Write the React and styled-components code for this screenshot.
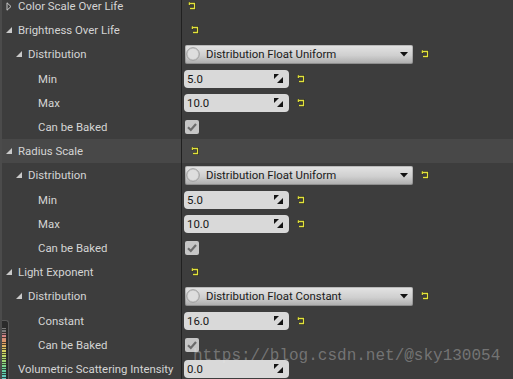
import React from "react";
import styled, { createGlobalStyle } from "styled-components";

const GlobalStyle = createGlobalStyle`
  html, body {
    margin: 0;
    padding: 0;
    background: #3d3d3d;
    overflow: hidden;
  }
`;

const rows = [
  { label: "Color Scale Over Life", level: 0, arrow: "closed", value: { type: "reset", offset: 7 } },
  { label: "Brightness Over Life", level: 0, arrow: "open", value: { type: "reset", offset: 10 } },
  { label: "Distribution", level: 1, arrow: "open", value: { type: "select", text: "Distribution Float Uniform" } },
  { label: "Min", level: 2, value: { type: "number", text: "5.0" } },
  { label: "Max", level: 2, value: { type: "number", text: "10.0" } },
  { label: "Can be Baked", level: 2, value: { type: "check" } },
  { label: "Radius Scale", level: 0, arrow: "open", hover: true, value: { type: "reset", offset: 10 } },
  { label: "Distribution", level: 1, arrow: "open", value: { type: "select", text: "Distribution Float Uniform" } },
  { label: "Min", level: 2, value: { type: "number", text: "5.0" } },
  { label: "Max", level: 2, value: { type: "number", text: "10.0" } },
  { label: "Can be Baked", level: 2, value: { type: "check" } },
  { label: "Light Exponent", level: 0, arrow: "open", value: { type: "reset", offset: 10 } },
  { label: "Distribution", level: 1, arrow: "open", value: { type: "select", text: "Distribution Float Constant" } },
  { label: "Constant", level: 2, value: { type: "number", text: "16.0" } },
  { label: "Can be Baked", level: 2, value: { type: "check" } },
  { label: "Volumetric Scattering Intensity", level: 0, value: { type: "number", text: "0.0", noReset: true } },
];

const ResetIcon = () => (
  <svg width="8" height="8" viewBox="0 0 8 8">
    <path d="M1.5 1.5 H6.5 V6.5 H2" fill="none" stroke="#222" strokeWidth="2.6" />
    <path d="M1.3 0 V3.2" stroke="#222" strokeWidth="2.4" />
    <path d="M1.5 1.5 H6.5 V6.5 H2" fill="none" stroke="#e2e23c" strokeWidth="1.3" />
    <path d="M1.3 0.3 V2.9" stroke="#e2e23c" strokeWidth="1.3" />
  </svg>
);

const Arrow = ({ kind }) =>
  kind === "open" ? (
    <svg width="6" height="6" viewBox="0 0 6 6">
      <polygon points="6,0 6,6 0,6" fill="#c9c9c9" />
    </svg>
  ) : kind === "closed" ? (
    <svg width="6" height="9" viewBox="0 0 6 9">
      <polygon points="1,0.8 5,4.5 1,8.2" fill="none" stroke="#c9c9c9" strokeWidth="1" />
    </svg>
  ) : null;

const SpinIcon = () => (
  <svg width="9" height="9" viewBox="0 0 9 9">
    <polygon points="0,0 5,0 0,5" fill="#141414" />
    <polygon points="9,9 3,9 9,3" fill="#141414" />
  </svg>
);

const Value = ({ value }) => {
  if (value.type === "reset") {
    return (
      <ResetSlot style={{ marginLeft: value.offset - 3 }}>
        <ResetIcon />
      </ResetSlot>
    );
  }
  if (value.type === "select") {
    return (
      <>
        <Select>
          <svg width="14" height="14" viewBox="0 0 14 14">
            <circle cx="7" cy="7" r="6.3" fill="#d4d4d4" stroke="#9c9c9c" strokeWidth="1" />
            <circle cx="7" cy="7" r="5" fill="#dedede" />
          </svg>
          <SelectText>{value.text}</SelectText>
          <svg width="8" height="5" viewBox="0 0 8 5">
            <polygon points="0,0 8,0 4,4.5" fill="#111" />
          </svg>
        </Select>
        <ResetSlot>
          <ResetIcon />
        </ResetSlot>
      </>
    );
  }
  if (value.type === "number") {
    return (
      <>
        <NumberBox>
          <span>{value.text}</span>
          <SpinIcon />
        </NumberBox>
        {!value.noReset && (
          <ResetSlot>
            <ResetIcon />
          </ResetSlot>
        )}
      </>
    );
  }
  return (
    <Check>
      <svg width="14" height="14" viewBox="0 0 14 14">
        <path d="M3 7.3 L5.8 10 L11 4" fill="none" stroke="#6c6c6c" strokeWidth="2.2" />
      </svg>
    </Check>
  );
};

const App = () => (
  <>
    <GlobalStyle />
    <Frame>
      <List>
        {rows.map((row, i) => (
          <Row key={i} $hover={row.hover}>
            <Name $level={row.level}>
              <ArrowSlot>
                <Arrow kind={row.arrow} />
              </ArrowSlot>
              {row.label}
            </Name>
            <Separator />
            <Cell>
              <Value value={row.value} />
            </Cell>
          </Row>
        ))}
      </List>
      <Meter>
        <MeterBar />
      </Meter>
      <Watermark>https://blog.csdn.net/@sky130054</Watermark>
    </Frame>
  </>
);

export default App;

const Frame = styled.div`
  position: relative;
  width: 513px;
  height: 379px;
  overflow: hidden;
  background: #3d3d3d;
  border-left: 2px solid #4b4b4b;
  box-sizing: border-box;
  font-family: Roboto, "Liberation Sans", sans-serif;
  font-size: 11.4px;
`;

const List = styled.div`
  margin-top: -6px;
  display: flex;
  flex-direction: column;
`;

const Row = styled.div`
  display: grid;
  grid-template-columns: 179px 1px 1fr;
  height: 24.2px;
  background: ${(p) => (p.$hover ? "#484848" : "transparent")};
`;

const Name = styled.div`
  display: flex;
  align-items: center;
  padding-left: ${(p) => 4 + p.$level * 10}px;
  color: #d4d4d4;
  white-space: nowrap;
`;

const ArrowSlot = styled.span`
  display: inline-flex;
  align-items: center;
  width: 12px;
  height: 9px;
`;

const Separator = styled.div`
  background: #202020;
`;

const Cell = styled.div`
  display: flex;
  align-items: center;
  padding-left: 2px;
  gap: 8px;
`;

const ResetSlot = styled.span`
  display: inline-flex;
  width: 8px;
  height: 8px;
`;

const Select = styled.div`
  width: 228px;
  height: 19px;
  margin-left: 1px;
  box-sizing: border-box;
  display: flex;
  align-items: center;
  gap: 6px;
  padding: 0 5px 0 1px;
  border-radius: 2px;
  background: linear-gradient(#e4e4e4, #cfcfcf 55%, #acacac);
  box-shadow: inset 0 0 0 1px rgba(0, 0, 0, 0.18);
`;

const SelectText = styled.span`
  flex: 1;
  color: #1a1a1a;
`;

const NumberBox = styled.div`
  width: 105px;
  height: 18px;
  box-sizing: border-box;
  display: flex;
  align-items: center;
  justify-content: space-between;
  padding: 0 6px 0 3px;
  border-radius: 4px;
  background: #d9d9d9;
  color: #161616;
`;

const Check = styled.div`
  width: 14px;
  height: 14px;
  margin-left: 1px;
  border-radius: 2px;
  background: #c6c6c6;
  display: flex;
`;

const Meter = styled.div`
  position: absolute;
  left: -2px;
  bottom: 0;
  width: 9px;
  height: 59px;
  box-sizing: border-box;
  padding: 7px 2px 0 2px;
  background: #2b2b2b;
  border: 1px solid #575757;
  border-left: none;
  border-bottom: none;
  border-radius: 0 3px 0 0;
  display: flex;
`;

const MeterBar = styled.div`
  flex: 1;
  background: repeating-linear-gradient(
      to bottom,
      transparent 0 1.5px,
      rgba(20, 20, 20, 0.7) 1.5px 2.5px
    ),
    linear-gradient(
      #7a7a7a 0 8%,
      #cf7f86 14%,
      #e0a064 30%,
      #d8d460 45%,
      #a6d86e 62%,
      #66d29a 80%,
      #5ec6c6
    );
`;

const Watermark = styled.div`
  position: absolute;
  left: 191px;
  top: 346px;
  font-family: "Liberation Mono", monospace;
  font-size: 16px;
  line-height: 20px;
  color: rgba(235, 235, 235, 0.32);
  white-space: nowrap;
  pointer-events: none;
`;
